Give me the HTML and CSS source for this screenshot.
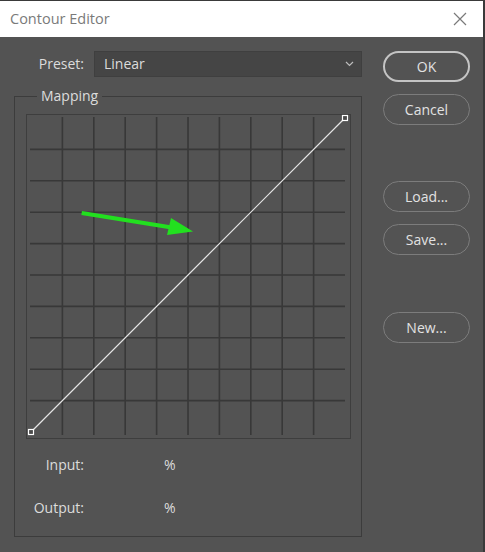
FILE: index.html
```html
<!DOCTYPE html>
<html>
<head>
<meta charset="utf-8">
<link rel="stylesheet" href="styles.css">
</head>
<body>
<div class="window">
  <div class="titlebar">
    <span class="title">Contour Editor</span>
    <svg class="close" width="14" height="14" viewBox="0 0 14 14"><path d="M1 1L13 13M13 1L1 13" stroke="#7a7a7a" stroke-width="1.2" fill="none"/></svg>
  </div>
  <div class="content">
    <div class="left">
      <div class="preset-row">
        <span class="label">Preset:</span>
        <div class="select"><span>Linear</span>
          <svg width="9" height="6" viewBox="0 0 9 6"><path d="M1 1L4.5 4.5L8 1" stroke="#bdbdbd" stroke-width="1.2" fill="none"/></svg>
        </div>
      </div>
      <fieldset class="mapping">
        <legend>Mapping</legend>
        <svg class="graph" width="325" height="325" viewBox="0 0 325 325">
          <rect x="0.5" y="0.5" width="324" height="324" fill="none" stroke="#3e3e3e" stroke-width="1"/>
          <g stroke="#383838" stroke-width="1.6" fill="none">
            <path d="M36.4 3V321M67.8 3V321M99.2 3V321M130.6 3V321M162 3V321M193.4 3V321M224.8 3V321M256.2 3V321M287.6 3V321"/>
            <path d="M4 35.4H319M4 66.8H319M4 98.2H319M4 129.6H319M4 161H319M4 192.4H319M4 223.8H319M4 255.2H319M4 286.6H319"/>
          </g>
          <line x1="5" y1="318" x2="319" y2="4" stroke="#e6e6e6" stroke-width="1.2"/>
          <rect x="2.5" y="315.5" width="5" height="5" fill="#4a4a4a" stroke="#ffffff" stroke-width="1.2"/>
          <rect x="316.5" y="1.5" width="5" height="5" fill="#4a4a4a" stroke="#ffffff" stroke-width="1.2"/>
          <g fill="#22e01f">
            <path d="M56 97L146 111.5L145.3 115.5L55.3 101Z"/>
            <path d="M167 117.5L141 121L145 104Z"/>
          </g>
        </svg>
        <div class="value-row input-row"><span class="label">Input:</span><span class="pct">%</span></div>
        <div class="value-row output-row"><span class="label">Output:</span><span class="pct">%</span></div>
      </fieldset>
    </div>
    <div class="buttons">
      <button class="btn default">OK</button>
      <button class="btn">Cancel</button>
      <button class="btn gap-lg">Load...</button>
      <button class="btn">Save...</button>
      <button class="btn gap-xl">New...</button>
    </div>
  </div>
</div>
</body>
</html>
```

FILE: styles.css
```css
html, body {
  margin: 0;
  padding: 0;
}
body {
  width: 485px;
  height: 552px;
  overflow: hidden;
  background: #535353;
  font-family: "Open Sans", "Noto Sans", sans-serif;
  font-size: 14px;
  color: #dcdcdc;
}
.window {
  width: 485px;
  height: 552px;
  box-sizing: border-box;
  border-top: 1px solid #3a3a3a;
  border-right: 2px solid #3a3a3a;
  background: #535353;
}
.titlebar {
  height: 36px;
  background: #ffffff;
  display: flex;
  align-items: center;
  justify-content: space-between;
  padding: 0 16px 0 10px;
}
.title {
  color: #7a7a7a;
  font-size: 14.5px;
  margin-top: -1px;
}
.close {
  display: block;
}
.content {
  display: flex;
  padding-top: 14px;
}
.left {
  width: 348px;
  margin-left: 14px;
}
.preset-row {
  display: flex;
  align-items: center;
  height: 26px;
}
.preset-row .label {
  margin-top: -2px;
}
.label {
  width: 70px;
  text-align: right;
  flex: none;
}
.select {
  margin-left: 10px;
  width: 268px;
  height: 26px;
  box-sizing: border-box;
  background: #454545;
  border: 1px solid #3f3f3f;
  display: flex;
  align-items: center;
  justify-content: space-between;
  padding: 0 7px 0 9px;
}
.select span {
  margin-top: -2px;
}
.mapping {
  margin: 11px 0 0 0;
  padding: 0;
  border: 1px solid #3c3c3c;
  width: 348px;
  height: 449px;
  box-sizing: border-box;
}
.mapping legend {
  margin-left: 22px;
  padding: 0 4px;
  line-height: 16px;
  height: 16px;
}
.graph {
  display: block;
  margin: 10px 0 0 11px;
}
.value-row {
  display: flex;
  align-items: center;
  height: 20px;
}
.value-row .label {
  width: 69px;
}
.input-row {
  margin-top: 15px;
}
.output-row {
  margin-top: 23px;
}
.pct {
  margin-left: 80px;
}
.buttons {
  display: flex;
  flex-direction: column;
  margin-left: 21px;
}
.btn {
  width: 87px;
  height: 31px;
  border-radius: 16px;
  border: 1px solid #7c7c7c;
  background: transparent;
  color: #e2e2e2;
  font-family: "Open Sans", "Noto Sans", sans-serif;
  font-size: 14px;
  padding: 0;
  margin-bottom: 12px;
}
.btn.default {
  border: 2px solid #c4c4c4;
}
.gap-lg {
  margin-top: 44px;
}
.gap-xl {
  margin-top: 45px;
}
```
